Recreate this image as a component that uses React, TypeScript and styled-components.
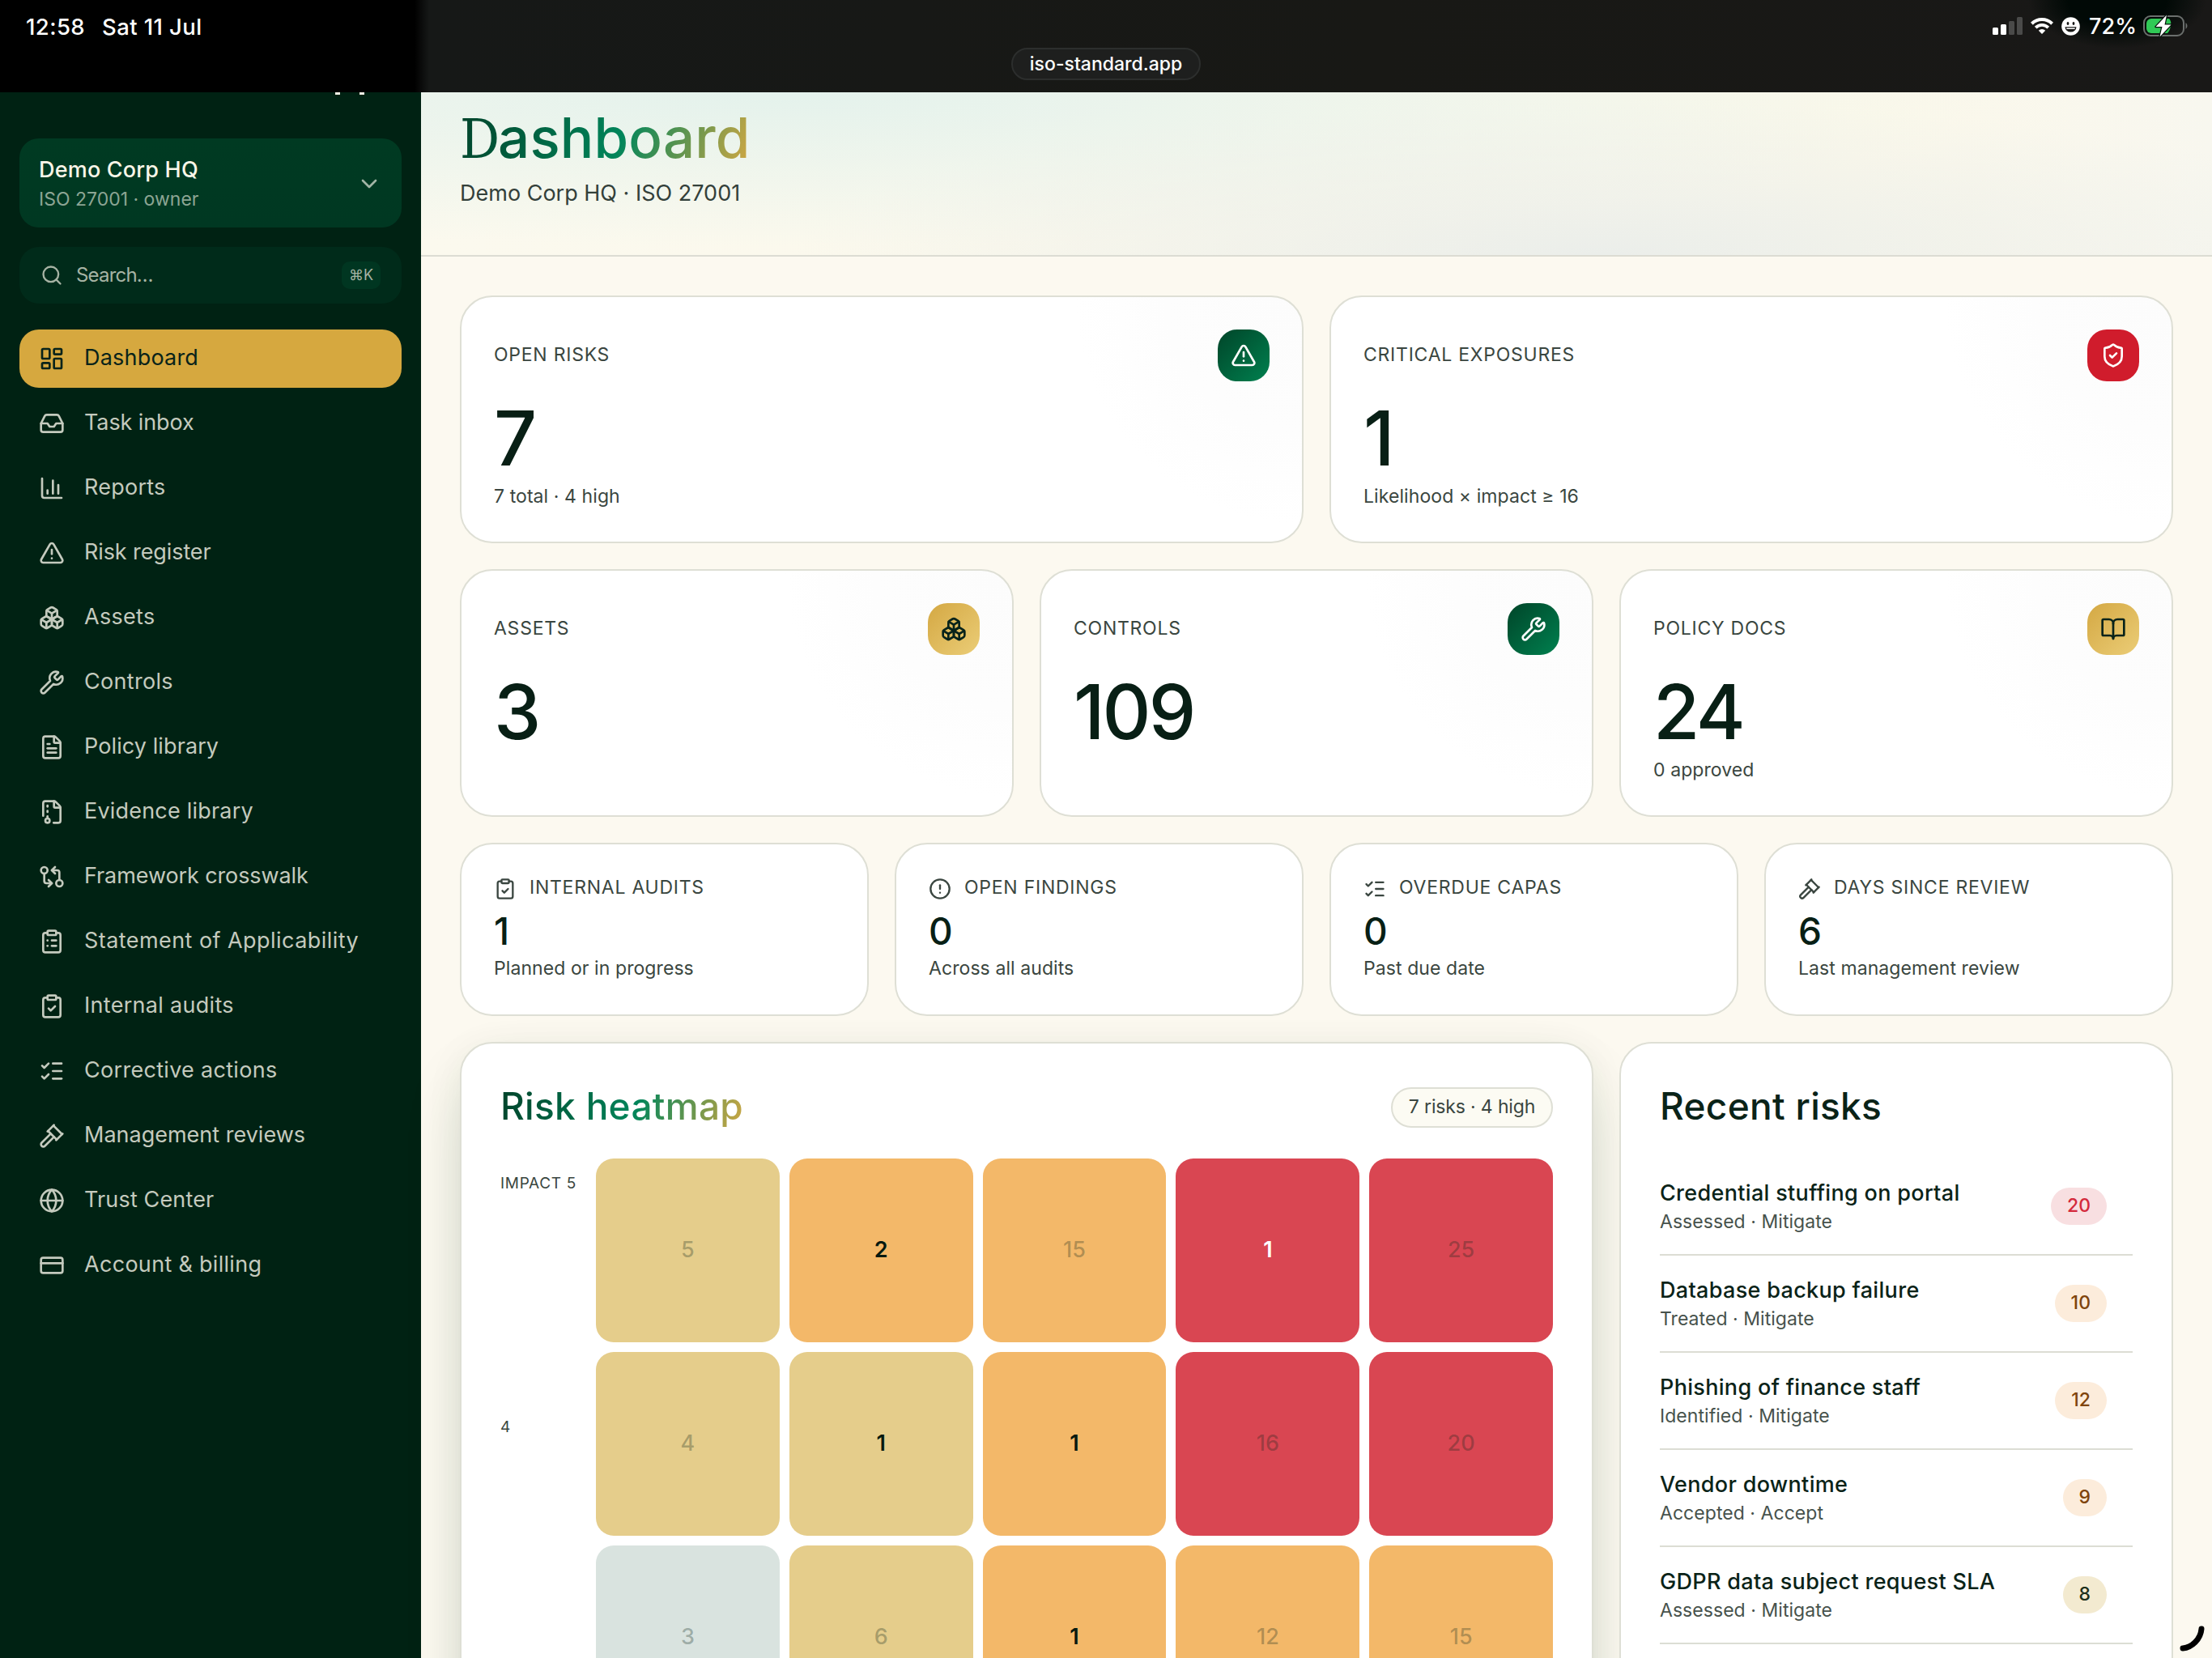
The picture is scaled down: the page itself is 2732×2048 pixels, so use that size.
import React from 'react';
import styled, { createGlobalStyle, css } from 'styled-components';
import {
  BookOpen,
  Boxes,
  ChartColumn,
  ChevronDown,
  CircleAlert,
  ClipboardCheck,
  ClipboardList,
  CreditCard,
  FileArchive,
  FileText,
  Gavel,
  GitCompareArrows,
  Globe,
  Inbox,
  LayoutDashboard,
  ListChecks,
  LucideIcon,
  Search,
  ShieldCheck,
  TriangleAlert,
  Wrench,
} from 'lucide-react';

const GlobalStyle = createGlobalStyle`
  * {
    box-sizing: border-box;
  }

  body {
    margin: 0;
    width: 2732px;
    height: 2048px;
    overflow: hidden;
    font-family: Inter, "Liberation Sans", sans-serif;
    background: #fcf9f0;
    color: #0a2318;
  }
`;

const Screen = styled.div`
  width: 2732px;
  height: 2048px;
  overflow: hidden;
  display: flex;
  flex-direction: column;
`;

/* ---------- status bar ---------- */

const TopBar = styled.div`
  flex: none;
  height: 114px;
  display: grid;
  grid-template-columns: 1fr auto 1fr;
  align-items: start;
  color: #fff;
  background:
    radial-gradient(ellipse 110px 60px at 2615px 0, #010906 55%, transparent 100%),
    linear-gradient(90deg, #000 0, #000 512px, #161817 530px, #181815 1700px, #191817 100%);
`;

const StatusLeft = styled.div`
  display: flex;
  gap: 21px;
  padding: 10px 0 0 32px;
  font-size: 27.500px;
  font-weight: 500;
  line-height: 46px;
  letter-spacing: 0.4px;
`;

const UrlPill = styled.div`
  height: 40px;
  width: 234px;
  margin-top: 59px;
  border: 2px solid #2c2e2d;
  border-radius: 20px;
  background: #1e1f1e;
  text-align: center;
  font-size: 23px;
  font-weight: 500;
  line-height: 37px;
`;

const StatusRight = styled.div`
  display: flex;
  justify-content: flex-end;
  align-items: center;
  padding-right: 29px;
  height: 64px;
`;

const Battery = styled.span`
  font-size: 27px;
  font-weight: 500;
  line-height: 46px;
  margin: 1px 8px 0 11px;
`;

/* ---------- sidebar ---------- */

const Body = styled.div`
  flex: 1;
  min-height: 0;
  display: flex;
`;

const Sidebar = styled.aside`
  width: 520px;
  flex: none;
  padding: 0 24px;
  background: #002213;
  color: #c4cabe;
`;

const BrandTail = styled.div`
  height: 57px;
  padding-left: 390px;
  display: flex;
  gap: 24px;

  i {
    width: 6px;
    height: 3px;
    background: #f4f2e6;
  }
`;

const OrgSwitcher = styled.div`
  height: 110px;
  padding: 2px 24px 0;
  border-radius: 24px;
  background: linear-gradient(180deg, #003a22, #003822);
  display: flex;
  align-items: center;
  justify-content: space-between;
  color: #a2b5a6;
`;

const OrgName = styled.div`
  font-size: 27px;
  font-weight: 500;
  line-height: 38px;
  letter-spacing: 0.2px;
  color: #faf6e8;
`;

const OrgMeta = styled.div`
  font-size: 23px;
  line-height: 34px;
  color: #8ca594;
`;

const SearchBox = styled.div`
  height: 70px;
  margin: 24px 0 32px;
  padding: 0 26px;
  border-radius: 24px;
  background: #002b1a;
  display: flex;
  align-items: center;
  gap: 16px;
  font-size: 24px;
  color: #a6b3a4;
`;

const Placeholder = styled.span`
  letter-spacing: -0.8px;
  padding-bottom: 2px;
`;

const Kbd = styled.span`
  width: 48px;
  height: 34px;
  margin-left: auto;
  border-radius: 10px;
  background: #003621;
  font-size: 18px;
  line-height: 34px;
  text-align: center;
`;

const Nav = styled.nav`
  display: flex;
  flex-direction: column;
  gap: 8px;
`;

const NavItem = styled.a<{ $active?: boolean; $tracking?: number }>`
  height: 72px;
  padding: 0 24px;
  border-radius: 24px;
  display: flex;
  align-items: center;
  gap: 24px;
  font-size: 27px;
  line-height: 70px;
  letter-spacing: ${({ $tracking = 0 }) => $tracking}px;

  span {
    height: 72px;
  }

  ${({ $active }) =>
    $active &&
    css`
      background: #d6a83f;
      color: #08231a;
    `}
`;

/* ---------- main ---------- */

const Main = styled.main`
  flex: 1;
  min-width: 0;
  background: #fcf9f0;
`;

const gradientText = css`
  color: transparent;
  background: linear-gradient(110deg, #00422a 0%, #00855a 55%, #d4a843 100%);
  -webkit-background-clip: text;
  background-clip: text;
`;

const Header = styled.header`
  height: 203px;
  padding: 18px 48px 0;
  border-bottom: 2px solid #dcdcd3;
  background:
    radial-gradient(ellipse 1000px 190px at 66% 100%, #ebeeea 0%, rgba(238, 241, 236, 0) 100%),
    radial-gradient(ellipse 1500px 190px at 20% 0, #e4f2ec 0%, rgba(232, 243, 236, 0) 100%),
    linear-gradient(90deg, #fbf9ee, #fbf8ea 80%, #f8f7ef);
`;

const PageTitle = styled.h1`
  ${gradientText}
  width: fit-content;
  height: 76px;
  margin: 0;
  font-size: 69px;
  font-weight: 550;
  line-height: 76px;
  letter-spacing: 0.2px;
`;

const SlabCap = styled.span`
  font-family: "DejaVu Serif Condensed", "DejaVu Serif", serif;
  font-stretch: condensed;
  font-weight: 400;
  font-size: 68px;
  line-height: 1;
  letter-spacing: -2px;
`;

const PageSubtitle = styled.p`
  margin: 12px 0 0;
  font-size: 27px;
  line-height: 38px;
  color: #33403a;
`;

const Content = styled.div`
  padding: 48px;
  display: flex;
  flex-direction: column;
  gap: 32px;
`;

const Row = styled.div<{ $cols: string }>`
  display: grid;
  grid-template-columns: ${({ $cols }) => $cols};
  gap: 32px;
`;

const Card = styled.section`
  border: 2px solid #dedfd5;
  border-radius: 40px;
  background: #fff;
`;

const StatCard = styled(Card)`
  height: 306px;
  padding: 40px;
  background: radial-gradient(circle 280px at 100% 0, #fcfcfc 0%, #fdfdfd 60%, #fff 100%);
`;

const StatHead = styled.div`
  height: 64px;
  display: flex;
  justify-content: space-between;
`;

const Label = styled.span`
  font-size: 23px;
  line-height: 63px;
  letter-spacing: 0.75px;
  text-transform: uppercase;
  color: #3a4640;
`;

type Tone = 'green' | 'red' | 'gold';

const badgeTones: Record<Tone, string> = {
  green: 'background: linear-gradient(135deg, #004529, #00804f); color: #fff;',
  red: 'background: #d01c2c; color: #fff;',
  gold: 'background: linear-gradient(135deg, #d4a843, #ebcd77); color: #08231a;',
};

const IconBadge = styled.span<{ $tone: Tone }>`
  width: 64px;
  height: 64px;
  border-radius: 24px;
  display: flex;
  align-items: center;
  justify-content: center;
  ${({ $tone }) => badgeTones[$tone]}
`;

const StatValue = styled.div`
  height: 96px;
  margin: 22px 0 6px;
  font-size: 93px;
  font-weight: 550;
  line-height: 96px;
  letter-spacing: -3px;
  color: #081f15;
`;

const StatNote = styled.div`
  font-size: 23px;
  line-height: 36px;
  letter-spacing: 0.08px;
  color: #3a4640;
`;

const MiniCard = styled(Card)`
  height: 214px;
  padding: 36px 40px 0;
`;

const MiniHead = styled.div`
  height: 38px;
  display: flex;
  align-items: center;
  gap: 16px;
  color: #3a4640;

  ${Label} {
    line-height: 35px;
    height: 38px;
  }
`;

const MiniValue = styled.div`
  font-size: 46px;
  font-weight: 500;
  line-height: 56px;
  margin: 5px 0 0;
  color: #081f15;
`;

const HeatCard = styled(Card)`
  height: 1360px;
  padding: 48px;
  box-shadow: 0 40px 80px -16px rgba(20, 60, 30, 0.22), 0 8px 48px rgba(20, 60, 30, 0.06);
`;

const PanelHead = styled.div`
  height: 94px;
  display: flex;
  justify-content: space-between;
`;

const PanelTitle = styled.h2<{ $gradient?: boolean }>`
  margin: 0;
  height: 64px;
  font-size: 46px;
  font-weight: 500;
  line-height: 58px;
  letter-spacing: 0.3px;
  ${({ $gradient }) => $gradient && gradientText}
`;

const CountPill = styled.span`
  height: 50px;
  width: 200px;
  margin-top: 6px;
  border: 2px solid #dedfd5;
  border-radius: 25px;
  background: #fcfbf3;
  font-size: 23px;
  line-height: 44px;
  letter-spacing: -0.15px;
  text-align: center;
  color: #3a4640;
`;

const Heatmap = styled.div`
  display: grid;
  grid-template-columns: 106px 1fr;
  gap: 12px;
`;

const Axis = styled.div`
  display: flex;
  flex-direction: column;
  gap: 240px;
  font-size: 19px;
  line-height: 61px;
  letter-spacing: 0.7px;
  color: #3a4640;
`;

const Cells = styled.div`
  display: grid;
  grid-template-columns: repeat(5, 1fr);
  gap: 12px;
`;

type Level = 'low' | 'medium' | 'high' | 'critical';

const levelColors: Record<Level, string> = {
  low: '#d9e3df',
  medium: '#e5cd8b',
  high: '#f3b869',
  critical: '#d94652',
};

const Cell = styled.div<{ $level: Level; $filled: boolean }>`
  aspect-ratio: 1;
  border-radius: 22px;
  display: flex;
  align-items: center;
  justify-content: center;
  padding-bottom: 2px;
  font-size: 27px;
  font-weight: ${({ $filled }) => ($filled ? 600 : 500)};
  background: ${({ $level }) => levelColors[$level]};
  color: ${({ $level, $filled }) => {
    if (!$filled) return 'rgba(10, 35, 24, 0.3)';
    return $level === 'critical' ? '#fff' : '#06190f';
  }};
`;

const RecentCard = styled(Card)`
  padding: 48px;
`;

const RiskRow = styled.div`
  height: 120px;
  padding-right: 32px;
  border-bottom: 2px solid #dcddd4;
  display: flex;
  align-items: center;
  justify-content: space-between;
`;

const RiskText = styled.div`
  padding-top: 2px;
`;

const RiskTitle = styled.div`
  font-size: 27px;
  font-weight: 500;
  line-height: 36px;
  letter-spacing: 0.32px;
  color: #0a2318;
`;

const RiskMeta = styled.div`
  font-size: 23px;
  line-height: 34px;
  letter-spacing: 0.05px;
  color: #47524c;
`;

const scoreTones = {
  critical: 'background: #f8dfe1; color: #d42a3c;',
  high: 'background: #fcecdb; color: #7f440c;',
  medium: 'background: #f3ead0; color: #1d2f1a;',
};

const Score = styled.span<{ $tone: keyof typeof scoreTones }>`
  height: 46px;
  padding: 0 20px;
  border-radius: 23px;
  font-size: 23px;
  font-weight: 500;
  line-height: 44px;
  ${({ $tone }) => scoreTones[$tone]}
`;

const CornerHandle = styled.svg`
  position: fixed;
  right: 0;
  bottom: 0;
`;

const navItems: { icon: LucideIcon; label: string; tracking?: number }[] = [
  { icon: LayoutDashboard, label: 'Dashboard', tracking: 0.2 },
  { icon: Inbox, label: 'Task inbox', tracking: -0.1 },
  { icon: ChartColumn, label: 'Reports', tracking: 0.25 },
  { icon: TriangleAlert, label: 'Risk register', tracking: -0.1 },
  { icon: Boxes, label: 'Assets', tracking: 0.3 },
  { icon: Wrench, label: 'Controls', tracking: 0.3 },
  { icon: FileText, label: 'Policy library', tracking: 0.1 },
  { icon: FileArchive, label: 'Evidence library', tracking: 0.2 },
  { icon: GitCompareArrows, label: 'Framework crosswalk', tracking: -0.1 },
  { icon: ClipboardList, label: 'Statement of Applicability', tracking: 0.44 },
  { icon: ClipboardCheck, label: 'Internal audits', tracking: 0.3 },
  { icon: ListChecks, label: 'Corrective actions', tracking: 0.3 },
  { icon: Gavel, label: 'Management reviews' },
  { icon: Globe, label: 'Trust Center', tracking: 0.15 },
  { icon: CreditCard, label: 'Account & billing', tracking: 0.3 },
];

const stats: { label: string; value: string; note?: string; icon: LucideIcon; tone: Tone }[] = [
  { label: 'Open risks', value: '7', note: '7 total · 4 high', icon: TriangleAlert, tone: 'green' },
  { label: 'Critical exposures', value: '1', note: 'Likelihood × impact ≥ 16', icon: ShieldCheck, tone: 'red' },
  { label: 'Assets', value: '3', icon: Boxes, tone: 'gold' },
  { label: 'Controls', value: '109', icon: Wrench, tone: 'green' },
  { label: 'Policy docs', value: '24', note: '0 approved', icon: BookOpen, tone: 'gold' },
];

const miniStats: { label: string; value: string; note: string; icon: LucideIcon }[] = [
  { label: 'Internal audits', value: '1', note: 'Planned or in progress', icon: ClipboardCheck },
  { label: 'Open findings', value: '0', note: 'Across all audits', icon: CircleAlert },
  { label: 'Overdue CAPAs', value: '0', note: 'Past due date', icon: ListChecks },
  { label: 'Days since review', value: '6', note: 'Last management review', icon: Gavel },
];

// open risk counts keyed by "impact-likelihood"
const counts: Record<string, number> = { '5-2': 2, '5-4': 1, '4-2': 1, '4-3': 1, '3-3': 1 };

const levelOf = (score: number): Level => {
  if (score >= 16) return 'critical';
  if (score >= 9) return 'high';
  if (score >= 4) return 'medium';
  return 'low';
};

const risks: { title: string; meta: string; score: number; tone: keyof typeof scoreTones }[] = [
  { title: 'Credential stuffing on portal', meta: 'Assessed · Mitigate', score: 20, tone: 'critical' },
  { title: 'Database backup failure', meta: 'Treated · Mitigate', score: 10, tone: 'high' },
  { title: 'Phishing of finance staff', meta: 'Identified · Mitigate', score: 12, tone: 'high' },
  { title: 'Vendor downtime', meta: 'Accepted · Accept', score: 9, tone: 'high' },
  { title: 'GDPR data subject request SLA', meta: 'Assessed · Mitigate', score: 8, tone: 'medium' },
];

const SignalIcon = styled.svg`
  margin-right: 8px;
`;

const WifiIcon = styled.svg`
  margin-right: 9px;
`;

const StatusIcons = () => (
  <>
    <SignalIcon width="38" height="24" viewBox="0 0 38 24">
      <rect x="0" y="14" width="7" height="9" rx="1.5" fill="#fff" />
      <rect x="10" y="10" width="7" height="13" rx="1.5" fill="#fff" />
      <rect x="20" y="6" width="7" height="17" rx="1.5" fill="#4a4a49" />
      <rect x="30" y="1" width="7" height="22" rx="1.5" fill="#4a4a49" />
    </SignalIcon>
    <WifiIcon width="30" height="22" viewBox="0 0 30 22">
      <path d="M2.400 8.2a18 18 0 0 1 25.2 0" fill="none" stroke="#fff" strokeWidth="4" />
      <path d="M7.2 13.2a11 11 0 0 1 15.6 0" fill="none" stroke="#fff" strokeWidth="3.8" />
      <path d="M10.8 16.8a6 6 0 0 1 8.4 0L15 21z" fill="#fff" />
    </WifiIcon>
    <svg width="23" height="23" viewBox="0 0 23 23">
      <circle cx="11.5" cy="11.5" r="11.3" fill="#fff" />
      <ellipse cx="8" cy="8" rx="1.4" ry="2" fill="#151614" />
      <ellipse cx="15" cy="8" rx="1.4" ry="2" fill="#151614" />
      <path d="M4.5 12.3h14a7 6.3 0 0 1-14 0z" fill="#151614" />
      <path d="M6.3 14.2h10.4" stroke="#fff" strokeWidth="1.5" />
    </svg>
  </>
);

const BatteryIcon = () => (
  <svg width="56" height="28" viewBox="0 0 56 28">
    <rect x="1" y="2" width="49" height="24" rx="8" fill="none" stroke="#6b6f6d" strokeWidth="2" />
    <path d="M52.5 10a5 5 0 0 1 0 8z" fill="#6b6f6d" />
    <path d="M10 5h22q3 3 2 9t-4 9H10a6 6 0 0 1-6-6v-6a6 6 0 0 1 6-6z" fill="#30c956" />
    <path
      d="M29 0.5L15.5 15h8l-3 12.5L34.5 12.5h-8z"
      fill="#fff"
      stroke="#06100b"
      strokeWidth="2.4"
      paintOrder="stroke"
      strokeLinejoin="round"
    />
  </svg>
);

const Stat: React.FC<(typeof stats)[number]> = ({ label, value, note, icon: Icon, tone }) => (
  <StatCard>
    <StatHead>
      <Label>{label}</Label>
      <IconBadge $tone={tone}>
        <Icon size={32} strokeWidth={2} />
      </IconBadge>
    </StatHead>
    <StatValue>{value}</StatValue>
    {note && <StatNote>{note}</StatNote>}
  </StatCard>
);

const App: React.FC = () => {
  return (
    <Screen>
      <GlobalStyle />

      <TopBar>
        <StatusLeft>
          <span>12:58</span>
          <span>Sat 11 Jul</span>
        </StatusLeft>
        <UrlPill>iso-standard.app</UrlPill>
        <StatusRight>
          <StatusIcons />
          <Battery>72%</Battery>
          <BatteryIcon />
        </StatusRight>
      </TopBar>

      <Body>
        <Sidebar>
          <BrandTail>
            <i />
            <i />
          </BrandTail>
          <OrgSwitcher>
            <div>
              <OrgName>Demo Corp HQ</OrgName>
              <OrgMeta>ISO 27001 · owner</OrgMeta>
            </div>
            <ChevronDown size={32} strokeWidth={2} />
          </OrgSwitcher>
          <SearchBox>
            <Search size={28} strokeWidth={2} />
            <Placeholder>Search…</Placeholder>
            <Kbd>⌘K</Kbd>
          </SearchBox>
          <Nav>
            {navItems.map(({ icon: Icon, label, tracking }, i) => (
              <NavItem key={label} $active={i === 0} $tracking={tracking}>
                <Icon size={32} strokeWidth={2} />
                <span>{label}</span>
              </NavItem>
            ))}
          </Nav>
        </Sidebar>

        <Main>
          <Header>
            <PageTitle>
              <SlabCap>D</SlabCap>ashboard
            </PageTitle>
            <PageSubtitle>Demo Corp HQ · ISO 27001</PageSubtitle>
          </Header>

          <Content>
            <Row $cols="1fr 1fr">
              {stats.slice(0, 2).map((s) => (
                <Stat key={s.label} {...s} />
              ))}
            </Row>

            <Row $cols="repeat(3, 1fr)">
              {stats.slice(2).map((s) => (
                <Stat key={s.label} {...s} />
              ))}
            </Row>

            <Row $cols="repeat(4, 1fr)">
              {miniStats.map(({ label, value, note, icon: Icon }) => (
                <MiniCard key={label}>
                  <MiniHead>
                    <Icon size={28} strokeWidth={2} />
                    <Label>{label}</Label>
                  </MiniHead>
                  <MiniValue>{value}</MiniValue>
                  <StatNote>{note}</StatNote>
                </MiniCard>
              ))}
            </Row>

            <Row $cols="1400px 1fr">
              <HeatCard>
                <PanelHead>
                  <PanelTitle $gradient>Risk heatmap</PanelTitle>
                  <CountPill>7 risks · 4 high</CountPill>
                </PanelHead>
                <Heatmap>
                  <Axis>
                    <span>IMPACT 5</span>
                    <span>4</span>
                  </Axis>
                  <Cells>
                    {[5, 4, 3].map((impact) =>
                      [1, 2, 3, 4, 5].map((likelihood) => {
                        const count = counts[`${impact}-${likelihood}`];
                        const score = impact * likelihood;
                        return (
                          <Cell key={`${impact}-${likelihood}`} $level={levelOf(score)} $filled={!!count}>
                            {count || score}
                          </Cell>
                        );
                      })
                    )}
                  </Cells>
                </Heatmap>
              </HeatCard>

              <RecentCard>
                <PanelHead>
                  <PanelTitle>Recent risks</PanelTitle>
                </PanelHead>
                {risks.map(({ title, meta, score, tone }) => (
                  <RiskRow key={title}>
                    <RiskText>
                      <RiskTitle>{title}</RiskTitle>
                      <RiskMeta>{meta}</RiskMeta>
                    </RiskText>
                    <Score $tone={tone}>{score}</Score>
                  </RiskRow>
                ))}
              </RecentCard>
            </Row>
          </Content>
        </Main>
      </Body>

      <CornerHandle width="44" height="44" viewBox="0 0 44 44">
        <path d="M31 8C30 21 19 31 8 32" fill="none" stroke="#000" strokeWidth="7" strokeLinecap="round" />
      </CornerHandle>
    </Screen>
  );
};

export default App;
